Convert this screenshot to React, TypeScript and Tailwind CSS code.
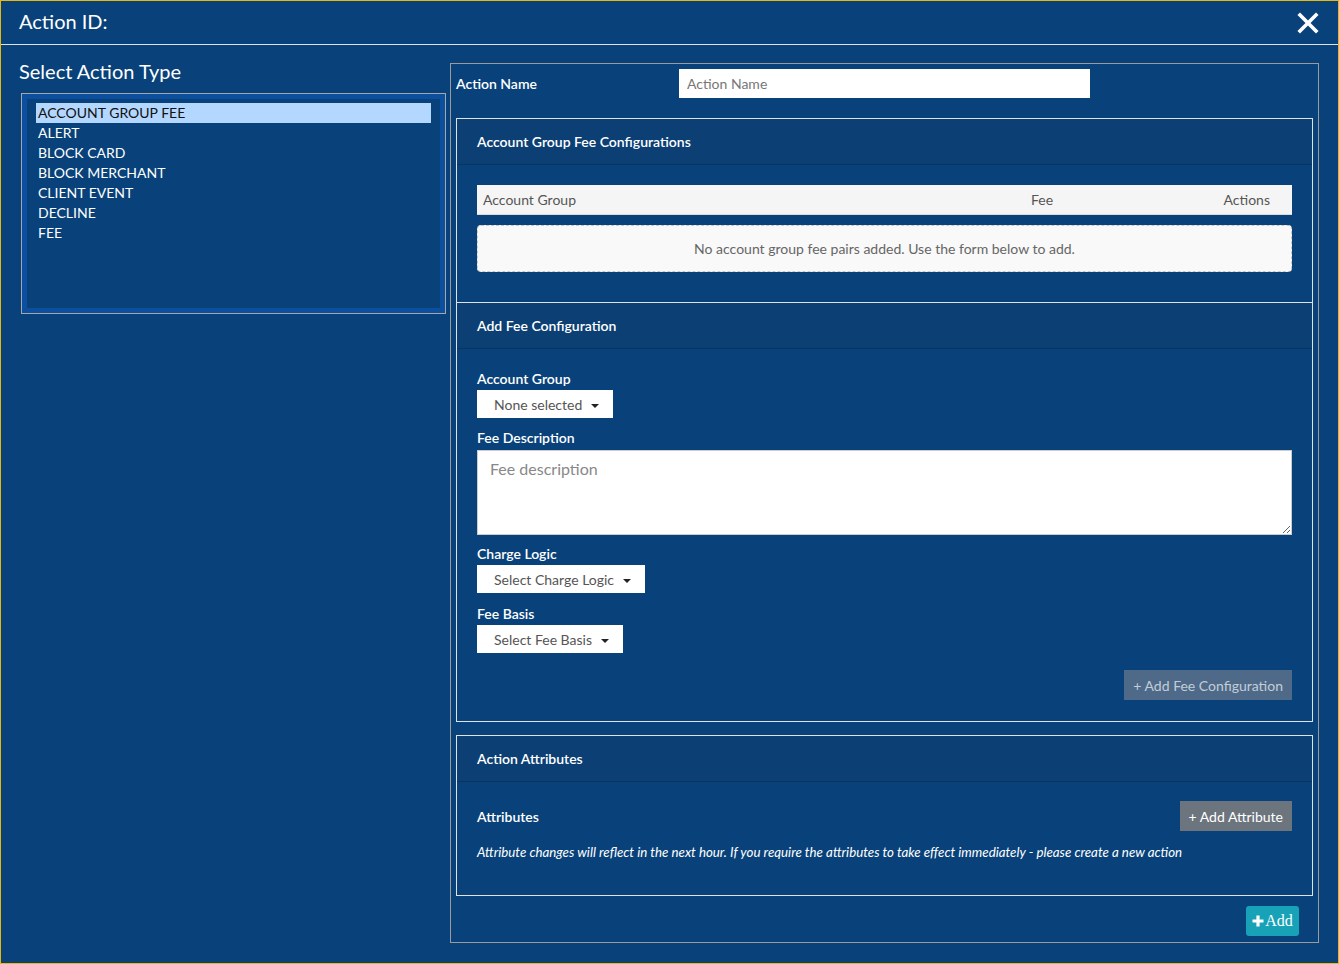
import React from "react";

const actionTypes = [
  "ACCOUNT GROUP FEE",
  "ALERT",
  "BLOCK CARD",
  "BLOCK MERCHANT",
  "CLIENT EVENT",
  "DECLINE",
  "FEE",
];

function Caret() {
  return (
    <span className="ml-[9px] mt-[3px] inline-block h-0 w-0 border-x-[4px] border-t-[4px] border-x-transparent border-t-[#222]" />
  );
}

function DropButton({ label }: { label: string }) {
  return (
    <button className="flex h-[28px] items-center bg-white pl-[17px] pr-[14px] text-[14px] text-[#555]">
      {label}
      <Caret />
    </button>
  );
}

function CardHeader({ title }: { title: string }) {
  return (
    <div className="flex h-[46px] items-center border-b border-[#07355f] bg-[#0c3f74] px-[20px] text-[14px] font-semibold">
      {title}
    </div>
  );
}

function FieldLabel({ children }: { children: React.ReactNode }) {
  return <div className="text-[14px] font-semibold leading-[20px]">{children}</div>;
}

export default function App() {
  return (
    <div className="h-[964px] w-[1339px] overflow-hidden border border-[#e8b90c] bg-[#09427a] font-['Lato','Noto_Sans',sans-serif] text-white">
      {/* Header */}
      <div className="flex h-[44px] items-center justify-between border-b border-[#dee2e6] pl-[18px] pr-[19px]">
        <h1 className="pb-[3px] text-[20px] leading-[28px]">Action ID:</h1>
        <button className="flex h-[22px] w-[22px] items-center justify-center">
          <svg width="22" height="22" viewBox="0 0 22 22">
            <path d="M3 3 L19 19 M19 3 L3 19" stroke="white" strokeWidth="3.6" strokeLinecap="square" />
          </svg>
        </button>
      </div>

      <div className="flex items-start pl-[18px]">
        {/* Left column */}
        <div className="w-[427px]">
          <h2 className="mt-[12px] text-[20px] leading-[28px]">Select Action Type</h2>
          <div className="ml-[2px] mt-[8px] h-[221px] w-[425px] border border-[#a7a7a7]">
            <div className="h-full border-[5px] border-[#0c4f9e] px-[9px] pt-[4px]">
              {actionTypes.map((t, i) => (
                <div
                  key={t}
                  className={`pl-[2px] text-[14px] leading-[20px] ${
                    i === 0 ? "bg-[#b3d7ff] text-[#111]" : "text-white"
                  }`}
                >
                  {t}
                </div>
              ))}
            </div>
          </div>
        </div>

        {/* Right panel */}
        <div className="ml-[4px] mt-[18px] h-[880px] w-[869px] border border-[#9b9b9b] px-[5px] pt-[5px]">
          <div className="flex h-[29px] items-center">
            <label className="w-[223px] text-[14px] font-semibold">Action Name</label>
            <input
              placeholder="Action Name"
              className="h-[29px] w-[411px] bg-white px-[8px] text-[14px] text-[#333] placeholder:text-[#777] outline-none"
            />
          </div>

          {/* Account Group Fee Configurations */}
          <div className="mt-[20px] border border-[#dfe3e8]">
            <CardHeader title="Account Group Fee Configurations" />
            <div className="p-[20px]">
              <div className="flex h-[30px] items-center border-b border-[#dcdcdc] bg-[#f5f5f5] text-[14px] text-[#555]">
                <div className="w-[480px] pl-[6px]">Account Group</div>
                <div className="w-[170px] text-center">Fee</div>
                <div className="flex-1 pr-[22px] text-right">Actions</div>
              </div>
              <div className="mb-[10px] mt-[10px] flex h-[47px] items-center justify-center rounded-[4px] border border-dashed border-[#c8c8c8] bg-[#f9f9f9] text-[14px] text-[#666]">
                No account group fee pairs added. Use the form below to add.
              </div>
            </div>
          </div>

          {/* Add Fee Configuration */}
          <div className="border border-t-0 border-[#dfe3e8]">
            <CardHeader title="Add Fee Configuration" />
            <div className="px-[20px] pb-[21px] pt-[20px]">
              <FieldLabel>Account Group</FieldLabel>
              <div className="mb-[10px] mt-[1px] flex">
                <DropButton label="None selected" />
              </div>
              <FieldLabel>Fee Description</FieldLabel>
              <textarea
                placeholder="Fee description"
                className="mb-[9px] mt-[2px] block h-[85px] w-full border border-[#ccc] bg-white px-[12px] py-[6px] text-[16px] text-[#333] placeholder:text-[#888] outline-none"
              />
              <FieldLabel>Charge Logic</FieldLabel>
              <div className="mb-[11px] mt-[1px] flex">
                <DropButton label="Select Charge Logic" />
              </div>
              <FieldLabel>Fee Basis</FieldLabel>
              <div className="mt-[1px] flex">
                <DropButton label="Select Fee Basis" />
              </div>
              <div className="mt-[17px] flex justify-end">
                <button className="h-[30px] bg-[#4e6a88] px-[9px] text-[14px] text-[#c3cdd8]">
                  + Add Fee Configuration
                </button>
              </div>
            </div>
          </div>

          {/* Action Attributes */}
          <div className="mt-[13px] border border-[#dfe3e8]">
            <CardHeader title="Action Attributes" />
            <div className="px-[20px] pb-[35px] pt-[19px]">
              <div className="flex h-[30px] items-center justify-between">
                <span className="text-[14px] font-semibold">Attributes</span>
                <button className="h-[30px] bg-[#6c757d] px-[9px] text-[14px] text-white">
                  + Add Attribute
                </button>
              </div>
              <p className="mt-[13px] text-[13.3px] italic leading-[16px]">
                Attribute changes will reflect in the next hour. If you require the attributes to take effect immediately - please create a new action
              </p>
            </div>
          </div>

          <div className="mt-[10px] flex justify-end pr-[14px]">
            <button className="flex h-[30px] w-[53px] items-center justify-center rounded-[3px] bg-[#17a2b8] font-['Liberation_Serif',serif] text-[16px] text-white">
              <svg width="12" height="12" viewBox="0 0 12 12" className="mr-[1px]">
                <path d="M6 0.5 V11.5 M0.5 6 H11.5" stroke="white" strokeWidth="3.2" />
              </svg>
              Add
            </button>
          </div>
        </div>
      </div>
    </div>
  );
}
